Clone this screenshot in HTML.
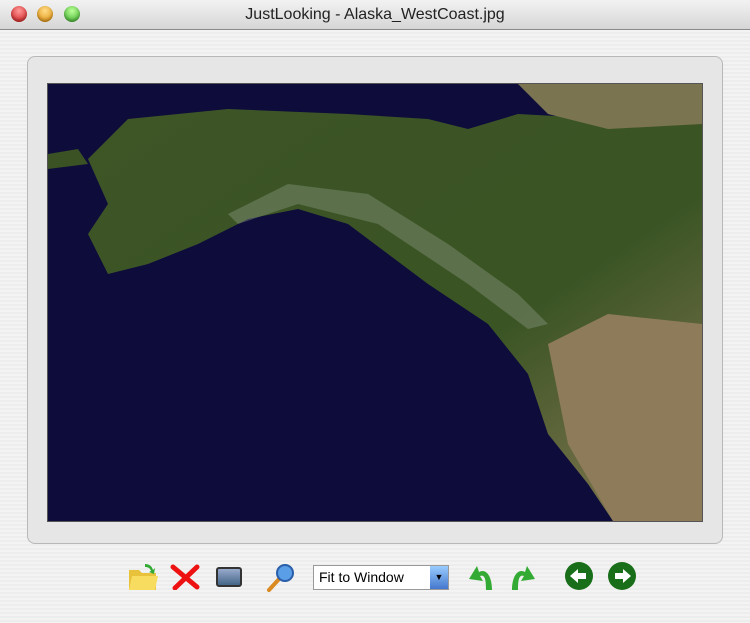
<!DOCTYPE html>
<html><head><style>
body{margin:0;width:750px;height:623px;overflow:hidden;font-family:"Liberation Sans",sans-serif;background:repeating-linear-gradient(#ededed 0 2px,#f3f3f3 2px 4px);position:relative}
.title{position:absolute;left:0;top:0;width:750px;height:29px;background:linear-gradient(#f2f2f2,#d6d6d6);border-bottom:1px solid #8a8a8a;text-align:center;font-size:16px;line-height:30px;color:#222}
.b{position:absolute;top:6px;width:16px;height:16px;border-radius:50%;box-shadow:inset 0 -2px 3px rgba(0,0,0,.3)}
.panel{position:absolute;left:27px;top:56px;width:694px;height:486px;border:1px solid #b8b8b8;border-radius:8px;background:#e6e6e6}
.img{position:absolute;left:47px;top:83px;width:654px;height:437px;background:#0d0c3a;border:1px solid #555;overflow:hidden}
.sel{position:absolute;left:313px;top:565px;width:134px;height:23px;border:1px solid #999;background:#fff;font-size:14px;line-height:23px}
</style></head><body>
<div class="title">JustLooking - Alaska_WestCoast.jpg
<div class="b" style="left:11px;background:radial-gradient(circle at 50% 30%,#f99,#c11)"></div>
<div class="b" style="left:37px;background:radial-gradient(circle at 50% 30%,#fd8,#d80)"></div>
<div class="b" style="left:64px;background:radial-gradient(circle at 50% 30%,#bf9,#3a2)"></div>
</div>
<div class="panel"></div>
<div class="img"><svg width="654" height="437" viewBox="0 0 654 437">
<defs><linearGradient id="g" x1="0" y1="0" x2="1" y2="1"><stop offset="0" stop-color="#3e5526"/><stop offset=".6" stop-color="#3a5424"/><stop offset="1" stop-color="#8a7a55"/></linearGradient></defs>
<path d="M40 75 L80 35 L180 25 L300 30 L380 35 L420 45 L470 30 L654 40 L654 437 L565 437 L540 400 L500 350 L480 290 L440 240 L380 200 L300 140 L250 125 L200 135 L150 160 L100 180 L60 190 L40 150 L60 120 Z" fill="url(#g)"/>
<path d="M470 0 L654 0 L654 40 L560 45 L500 30 Z" fill="#7a7450"/>
<path d="M500 260 L560 230 L654 240 L654 437 L565 437 L520 360 Z" fill="#8e7b5a"/>
<path d="M180 130 L240 100 L320 110 L400 160 L470 210 L500 240 L480 245 L420 200 L330 140 L250 120 L190 140 Z" fill="#8f9a88" opacity=".4"/>
<path d="M0 70 L30 65 L40 80 L0 85 Z" fill="#3b5224"/>
</svg></div>
<svg style="position:absolute;left:127px;top:562px" width="32" height="30"><path d="M2 8h10l3 3h14v17H2z" fill="#e8c23a"/><path d="M5 14h26l-3 14H2z" fill="#f8dc60"/><path d="M18 2c4 0 7 2 8 6l2-2-1 6-5-2 2-1c-1-3-3-4-6-4z" fill="#3a3"/></svg>
<svg style="position:absolute;left:170px;top:564px" width="30" height="26"><path d="M3 3L27 23M27 3L5 24" stroke="#e11" stroke-width="5" stroke-linecap="round"/></svg>
<div style="position:absolute;left:216px;top:567px;width:22px;height:16px;border:2px solid #333;border-radius:3px;background:linear-gradient(#9ac,#468)"></div>
<svg style="position:absolute;left:265px;top:562px" width="32" height="32"><line x1="4" y1="28" x2="15" y2="16" stroke="#d98a20" stroke-width="4" stroke-linecap="round"/><circle cx="20" cy="11" r="8" fill="#5a9ee8" stroke="#2a5ea8" stroke-width="2"/></svg>
<div class="sel"><span style="padding-left:5px">Fit to Window</span><div style="position:absolute;right:0;top:0;width:18px;height:23px;background:linear-gradient(#9cf,#47c);font-size:9px;text-align:center;color:#000">▼</div></div>
<svg style="position:absolute;left:466px;top:562px" width="32" height="30"><path d="M26 28C26 14 20 6 13 10L11 4 3 17 17 19 14 14C19 12 20 18 20 28z" fill="#3a3"/></svg>
<svg style="position:absolute;left:506px;top:562px" width="32" height="30"><path d="M6 28C6 14 12 6 19 10L21 4 29 17 15 19 18 14C13 12 12 18 12 28z" fill="#3a3"/></svg>
<svg style="position:absolute;left:564px;top:561px" width="30" height="30"><circle cx="15" cy="15" r="14" fill="#196e19"/><path d="M6 15l8-7v4h8v6h-8v4z" fill="#fff"/></svg>
<svg style="position:absolute;left:607px;top:561px" width="30" height="30"><circle cx="15" cy="15" r="14" fill="#196e19"/><path d="M24 15l-8-7v4H8v6h8v4z" fill="#fff"/></svg>
</body></html>
